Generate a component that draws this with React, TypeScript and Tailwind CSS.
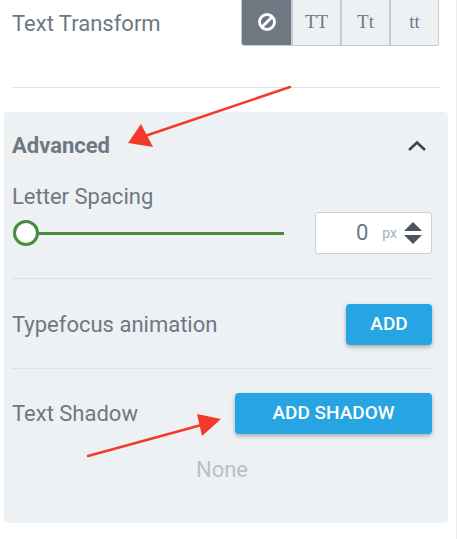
import React from "react";

function NoneIcon() {
  return (
    <svg width="20" height="20" viewBox="0 0 20 20" fill="none">
      <circle cx="10" cy="10" r="7.5" stroke="white" strokeWidth="2.8" />
      <line x1="5.2" y1="14.8" x2="14.8" y2="5.2" stroke="white" strokeWidth="2.8" />
    </svg>
  );
}

export default function App() {
  return (
    <div
      className="relative w-[457px] h-[539px] overflow-hidden bg-white text-[#6d7882]"
      style={{ fontFamily: "Roboto, 'Liberation Sans', sans-serif" }}
    >
      <div className="absolute top-0 bottom-0 right-0 w-px bg-[#eceef0]" />

      {/* Text Transform row */}
      <div className="flex items-center justify-between h-[47px] pl-[12px] pr-[18px]">
        <span className="text-[22px] leading-6">Text Transform</span>
        <div className="flex h-[47px] mt-[-2px] rounded-b-[3px] border border-t-0 border-[#c5ccd3] overflow-hidden">
          <div className="w-[49px] flex items-center justify-center bg-[#6d7882]">
            <NoneIcon />
          </div>
          {["TT", "Tt", "tt"].map((t) => (
            <div
              key={t}
              className="w-[49px] flex items-center justify-center bg-[#eef1f3] border-l-2 border-[#c5ccd3] text-[19px] text-[#6d7882]"
              style={{ fontFamily: "'Liberation Serif', serif" }}
            >
              {t}
            </div>
          ))}
        </div>
      </div>

      <div className="mt-[40px] mx-[12px] mr-[17px] h-px bg-[#e4e4de]" />

      {/* Advanced panel */}
      <div className="mt-[24px] ml-[4px] w-[444px] rounded-[4px] bg-[#eef1f3] pl-[8px] pr-[16px] pt-[20px] pb-[41px]">
        <div className="flex items-center justify-between h-[28px]">
          <span className="text-[22px] font-bold leading-6">Advanced</span>
          <svg width="22" height="14" viewBox="0 0 22 14" className="mr-[4px]">
            <path d="M3 11 L11 3.5 L19 11" fill="none" stroke="#3f434a" strokeWidth="2.6" />
          </svg>
        </div>

        <div className="mt-[25px] text-[22px] leading-6">Letter Spacing</div>

        <div className="mt-[3px] flex items-center justify-between h-[42px]">
          <div className="flex items-center ml-[1px]">
            <div className="w-[26px] h-[26px] rounded-full border-[3px] border-[#4a8a3b] bg-white" />
            <div className="w-[245px] h-[3px] bg-[#4a8a3b]" />
          </div>
          <div className="w-[117px] h-[42px] bg-white border border-[#c9cfd5] rounded-[3px] flex items-center justify-end pr-[8px]">
            <span className="text-[22px] leading-6 mr-[14px]">0</span>
            <span className="text-[14px] text-[#a3b0bc] mr-[6px]">px</span>
            <svg width="20" height="26" viewBox="0 0 20 26">
              <path d="M1 11 L10 2 L19 11 Z" fill="#4f555d" />
              <path d="M1 15 L10 24 L19 15 Z" fill="#4f555d" />
            </svg>
          </div>
        </div>

        <div className="mt-[24px] h-px bg-[#e4dfdb]" />

        <div className="mt-[25px] flex items-center justify-between h-[41px]">
          <span className="text-[22px] leading-6">Typefocus animation</span>
          <button className="w-[86px] h-[41px] rounded-[4px] bg-[#27a5e3] text-white text-[19px] font-medium shadow-[0_2px_4px_rgba(0,0,0,0.3)]">
            ADD
          </button>
        </div>

        <div className="mt-[23px] h-px bg-[#e4dfdb]" />

        <div className="mt-[24px] flex items-center justify-between h-[41px]">
          <span className="text-[22px] leading-6">Text Shadow</span>
          <button className="w-[197px] h-[41px] rounded-[4px] bg-[#27a5e3] text-white text-[19px] font-medium shadow-[0_2px_4px_rgba(0,0,0,0.3)]">
            ADD SHADOW
          </button>
        </div>

        <div className="mt-[24px] text-center text-[22px] leading-6 text-[#b8c1c9]">None</div>
      </div>

      {/* Annotation arrows */}
      <svg className="absolute inset-0 pointer-events-none" width="457" height="539">
        <line x1="290" y1="87" x2="145" y2="136" stroke="#f2392b" strokeWidth="2.5" strokeLinecap="round" />
        <path d="M128 143 L141 124 L153 147 Z" fill="#f2392b" />
        <line x1="88" y1="456" x2="205" y2="424" stroke="#f2392b" strokeWidth="2.5" strokeLinecap="round" />
        <path d="M221 419 L197 414 L202 436 Z" fill="#f2392b" />
      </svg>
    </div>
  );
}
